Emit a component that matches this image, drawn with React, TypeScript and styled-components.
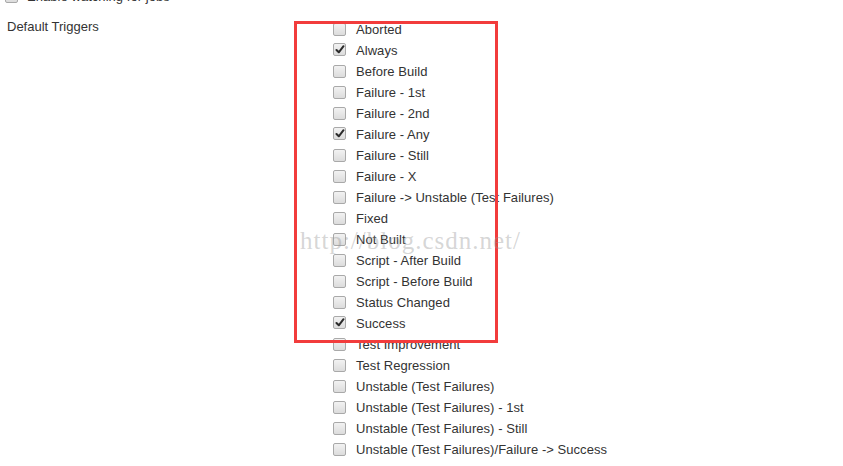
import styled, { createGlobalStyle } from "styled-components";

const GlobalStyle = createGlobalStyle`
  html, body {
    margin: 0;
    padding: 0;
    background: #fff;
    overflow: hidden;
  }
  body {
    font-family: "Liberation Sans", Arial, sans-serif;
    font-size: 13px;
    color: #333;
  }
`;

const Page = styled.div`
  position: relative;
  width: 843px;
  height: 466px;
  overflow: hidden;
`;

const Content = styled.div`
  margin-top: -14px;
  display: flex;
  flex-direction: column;
`;

const TopRow = styled.label`
  display: flex;
  align-items: center;
  gap: 9px;
  height: 21px;
  padding-left: 5px;
  margin-bottom: 12px;
`;

const Section = styled.div`
  display: flex;
  align-items: flex-start;
`;

const Label = styled.div`
  width: 326px;
  padding-left: 7px;
  line-height: 17px;
  margin-top: -1px;
`;

const List = styled.div`
  display: flex;
  flex-direction: column;
`;

const Row = styled.label`
  display: flex;
  align-items: center;
  gap: 10px;
  height: 21px;
  white-space: nowrap;
`;

const Box = styled.span<{ $checked?: boolean }>`
  width: 11px;
  height: 11px;
  border: 1px solid #a9a9a9;
  border-radius: 2px;
  background: linear-gradient(#f2f2f2, #dcdcdc);
  display: flex;
  align-items: center;
  justify-content: center;
  flex-shrink: 0;
  margin-top: ${(p) => (p.$checked ? "-3px" : "-1px")};
`;

const Text = styled.span`
  font-size: 13px;
  letter-spacing: 0.05px;
  color: #333;
`;

const Highlight = styled.div`
  position: absolute;
  left: 294px;
  top: 21px;
  width: 198px;
  height: 316px;
  border: 3px solid #f23c3c;
  pointer-events: none;
`;

const Watermark = styled.div`
  position: absolute;
  left: 300px;
  top: 227px;
  font-family: "Liberation Serif", "Times New Roman", serif;
  font-size: 25px;
  letter-spacing: 1px;
  color: rgba(150, 150, 150, 0.4);
  pointer-events: none;
`;

function Check({ checked }: { checked?: boolean }) {
  return (
    <Box $checked={checked}>
      {checked && (
        <svg width="10" height="9" viewBox="0 0 10 9">
          <path d="M1.5 5 L3.8 7.3 L8.5 1.2" fill="none" stroke="#2b2b2b" strokeWidth="2" strokeLinecap="round" strokeLinejoin="round" />
        </svg>
      )}
    </Box>
  );
}

const triggers: [string, boolean][] = [
  ["Aborted", false],
  ["Always", true],
  ["Before Build", false],
  ["Failure - 1st", false],
  ["Failure - 2nd", false],
  ["Failure - Any", true],
  ["Failure - Still", false],
  ["Failure - X", false],
  ["Failure -> Unstable (Test Failures)", false],
  ["Fixed", false],
  ["Not Built", false],
  ["Script - After Build", false],
  ["Script - Before Build", false],
  ["Status Changed", false],
  ["Success", true],
  ["Test Improvement", false],
  ["Test Regression", false],
  ["Unstable (Test Failures)", false],
  ["Unstable (Test Failures) - 1st", false],
  ["Unstable (Test Failures) - Still", false],
  ["Unstable (Test Failures)/Failure -> Success", false],
];

export default function App() {
  return (
    <Page>
      <GlobalStyle />
      <Content>
        <TopRow>
          <Check />
          <Text>Enable watching for jobs</Text>
        </TopRow>
        <Section>
          <Label>Default Triggers</Label>
          <List>
            {triggers.map(([name, checked]) => (
              <Row key={name}>
                <Check checked={checked} />
                <Text>{name}</Text>
              </Row>
            ))}
          </List>
        </Section>
      </Content>
      <Highlight />
      <Watermark>http://blog.csdn.net/</Watermark>
    </Page>
  );
}
